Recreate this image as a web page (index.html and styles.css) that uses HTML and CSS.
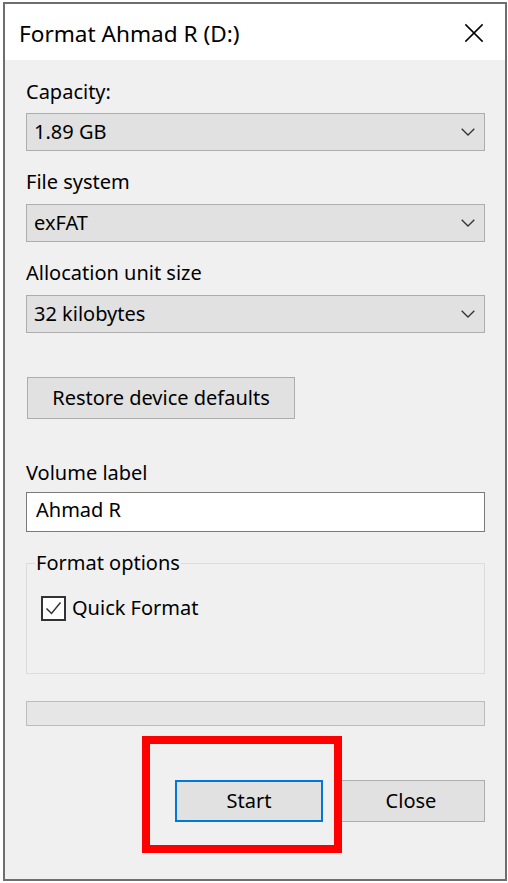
FILE: index.html
```html
<!DOCTYPE html>
<html>
<head>
<meta charset="utf-8">
<link rel="stylesheet" href="styles.css">
</head>
<body>
<div class="window">
  <div class="titlebar">
    <span class="title">Format Ahmad R (D:)</span>
    <svg class="close-x" width="22" height="22" viewBox="0 0 22 22"><path d="M1.5 1.5 L20.5 20.5 M20.5 1.5 L1.5 20.5" stroke="#000" stroke-width="1.6" fill="none"/></svg>
  </div>
  <div class="content">
    <div class="label first">Capacity:</div>
    <div class="combo"><span>1.89 GB</span><svg class="chev" width="14" height="8" viewBox="0 0 14 8"><path d="M0.7 0.7 L7 7 L13.3 0.7" stroke="#333" stroke-width="1.3" fill="none"/></svg></div>
    <div class="label">File system</div>
    <div class="combo"><span>exFAT</span><svg class="chev" width="14" height="8" viewBox="0 0 14 8"><path d="M0.7 0.7 L7 7 L13.3 0.7" stroke="#333" stroke-width="1.3" fill="none"/></svg></div>
    <div class="label">Allocation unit size</div>
    <div class="combo"><span>32 kilobytes</span><svg class="chev" width="14" height="8" viewBox="0 0 14 8"><path d="M0.7 0.7 L7 7 L13.3 0.7" stroke="#333" stroke-width="1.3" fill="none"/></svg></div>
    <div class="btn restore">Restore device defaults</div>
    <div class="label vol">Volume label</div>
    <div class="textbox">Ahmad R</div>
    <fieldset class="group">
      <legend>Format options</legend>
      <div class="check-row">
        <span class="checkbox"><svg width="21" height="21" viewBox="0 0 21 21"><path d="M3.5 10.5 L8.5 15.5 L17.5 4.5" stroke="#333" stroke-width="1.5" fill="none"/></svg></span>
        <span class="check-label">Quick Format</span>
      </div>
    </fieldset>
    <div class="progress"></div>
    <div class="buttons">
      <div class="btn action start">Start</div>
      <div class="btn action">Close</div>
    </div>
  </div>
  <div class="highlight"></div>
</div>
</body>
</html>
```
FILE: styles.css
```css
html, body {
  margin: 0;
  padding: 0;
  background: #ffffff;
}
body {
  font-family: "Noto Sans", "Open Sans", sans-serif;
  color: #000;
  width: 508px;
  height: 883px;
  overflow: hidden;
}
.window {
  position: relative;
  margin: 2px 1px 0 3px;
  width: 504px;
  height: 879px;
  box-sizing: border-box;
  border: 2px solid #6e6e6e;
  background: #f0f0f0;
  display: flex;
  flex-direction: column;
}
.titlebar {
  height: 56px;
  background: #ffffff;
  display: flex;
  align-items: center;
  justify-content: space-between;
  padding: 0 21px 0 14px;
  flex: none;
}
.title {
  font-size: 22.6px;
  line-height: 30px;
  margin-top: 4px;
}
.close-x {
  margin-top: 1px;
  width: 20px;
  height: 20px;
}
.content {
  display: flex;
  flex-direction: column;
  padding: 0 20px 0 21px;
}
.label {
  font-size: 20px;
  line-height: 30px;
  height: 30px;
  margin-top: 16px;
  margin-bottom: 7px;
}
.label.first {
  margin-top: 17px;
  margin-bottom: 6px;
}
.label.vol {
  margin-top: 39px;
  margin-bottom: 4px;
}
.combo {
  height: 38px;
  box-sizing: border-box;
  border: 1px solid #adadad;
  background: #e1e1e1;
  display: flex;
  align-items: center;
  justify-content: space-between;
  padding: 0 9px 2px 7px;
  font-size: 20px;
}
.chev {
  width: 14px;
  height: 8px;
  margin-top: 2px;
}
.btn {
  box-sizing: border-box;
  border: 1px solid #adadad;
  background: #e1e1e1;
  height: 42px;
  display: flex;
  align-items: center;
  justify-content: center;
  font-size: 20px;
  padding-bottom: 2px;
}
.restore {
  margin-top: 44px;
  margin-left: 1px;
  width: 268px;
}
.textbox {
  height: 40px;
  box-sizing: border-box;
  border: 1px solid #7a7a7a;
  background: #ffffff;
  font-size: 20px;
  line-height: 34px;
  padding: 0 0 4px 9px;
}
.group {
  margin: 15px 0 0 0;
  padding: 0 0 0 8px;
  border: 1px solid #dcdcdc;
  height: 127px;
  box-sizing: border-box;
  min-width: 0;
}
.group legend {
  font-size: 20px;
  line-height: 32px;
  padding: 0 1px;
}
.check-row {
  display: flex;
  align-items: center;
  margin-left: 6px;
  margin-top: 17px;
}
.checkbox {
  width: 25px;
  height: 25px;
  box-sizing: border-box;
  border: 2px solid #333333;
  background: #ffffff;
  display: flex;
  align-items: center;
  justify-content: center;
}
.checkbox svg {
  width: 21px;
  height: 21px;
}
.check-label {
  font-size: 20px;
  margin-left: 6px;
  margin-top: -3px;
}
.progress {
  margin-top: 27px;
  height: 25px;
  box-sizing: border-box;
  border: 1px solid #bcbcbc;
  background: #e6e6e6;
}
.buttons {
  margin-top: 54px;
  display: flex;
  justify-content: flex-end;
  gap: 14px;
}
.action {
  width: 148px;
}
.start {
  border: 2px solid #0078d7;
}
.highlight {
  position: absolute;
  left: 137px;
  top: 732px;
  width: 200px;
  height: 117px;
  box-sizing: border-box;
  border: 8px solid #ff0000;
}
```
